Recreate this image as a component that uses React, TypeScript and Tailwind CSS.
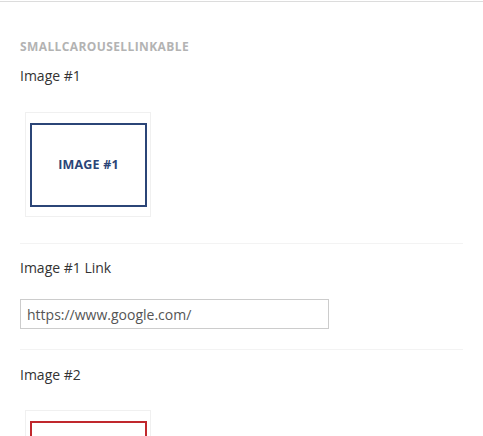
import React from 'react';

const FONT = { fontFamily: '"Open Sans", "Liberation Sans", sans-serif' };

function Thumb({ label, color }: { label: string; color: string }) {
  return (
    <div className="ml-[5px] w-[126px] h-[105px] border border-[#f0f0f0] bg-white pt-[10px] pl-[4px]">
      <div
        className="w-[117px] h-[84px] border-2 grid place-items-center"
        style={{ borderColor: color }}
      >
        <span className="text-[12.5px] font-bold tracking-[0.2px]" style={{ color }}>
          {label}
        </span>
      </div>
    </div>
  );
}

function Sep() {
  return <div className="h-px bg-[#f3f3f3]" />;
}

export default function App() {
  return (
    <div className="w-[483px] h-[436px] overflow-hidden bg-white pt-px" style={FONT}>
      <div className="border-t border-[#dcdcdc]" />
      <div className="pl-5 pr-5">
        <div className="mt-[35px] h-5 leading-5 text-[12px] font-bold tracking-[0.4px] text-[#b3b3b3]">
          SMALLCAROUSELLINKABLE
        </div>

        <div className="mt-[9px] h-5 leading-5 text-[14px] text-[#333]">Image #1</div>
        <div className="mt-[26px] mb-[26px]">
          <Thumb label="IMAGE #1" color="#2b4577" />
        </div>
        <Sep />

        <div className="mt-[14px] h-5 leading-5 text-[14px] text-[#333]">Image #1 Link</div>
        <input
          readOnly
          value="https://www.google.com/"
          className="mt-[21px] block w-[309px] h-[30px] border border-[#cccccc] px-[6px] text-[14px] text-[#555] outline-none"
          style={FONT}
        />
        <div className="h-[20px]" />
        <Sep />

        <div className="mt-[15px] h-5 leading-5 text-[14px] text-[#333]">Image #2</div>
        <div className="mt-[25px]">
          <Thumb label="IMAGE #2" color="#c0282d" />
        </div>
      </div>
    </div>
  );
}
